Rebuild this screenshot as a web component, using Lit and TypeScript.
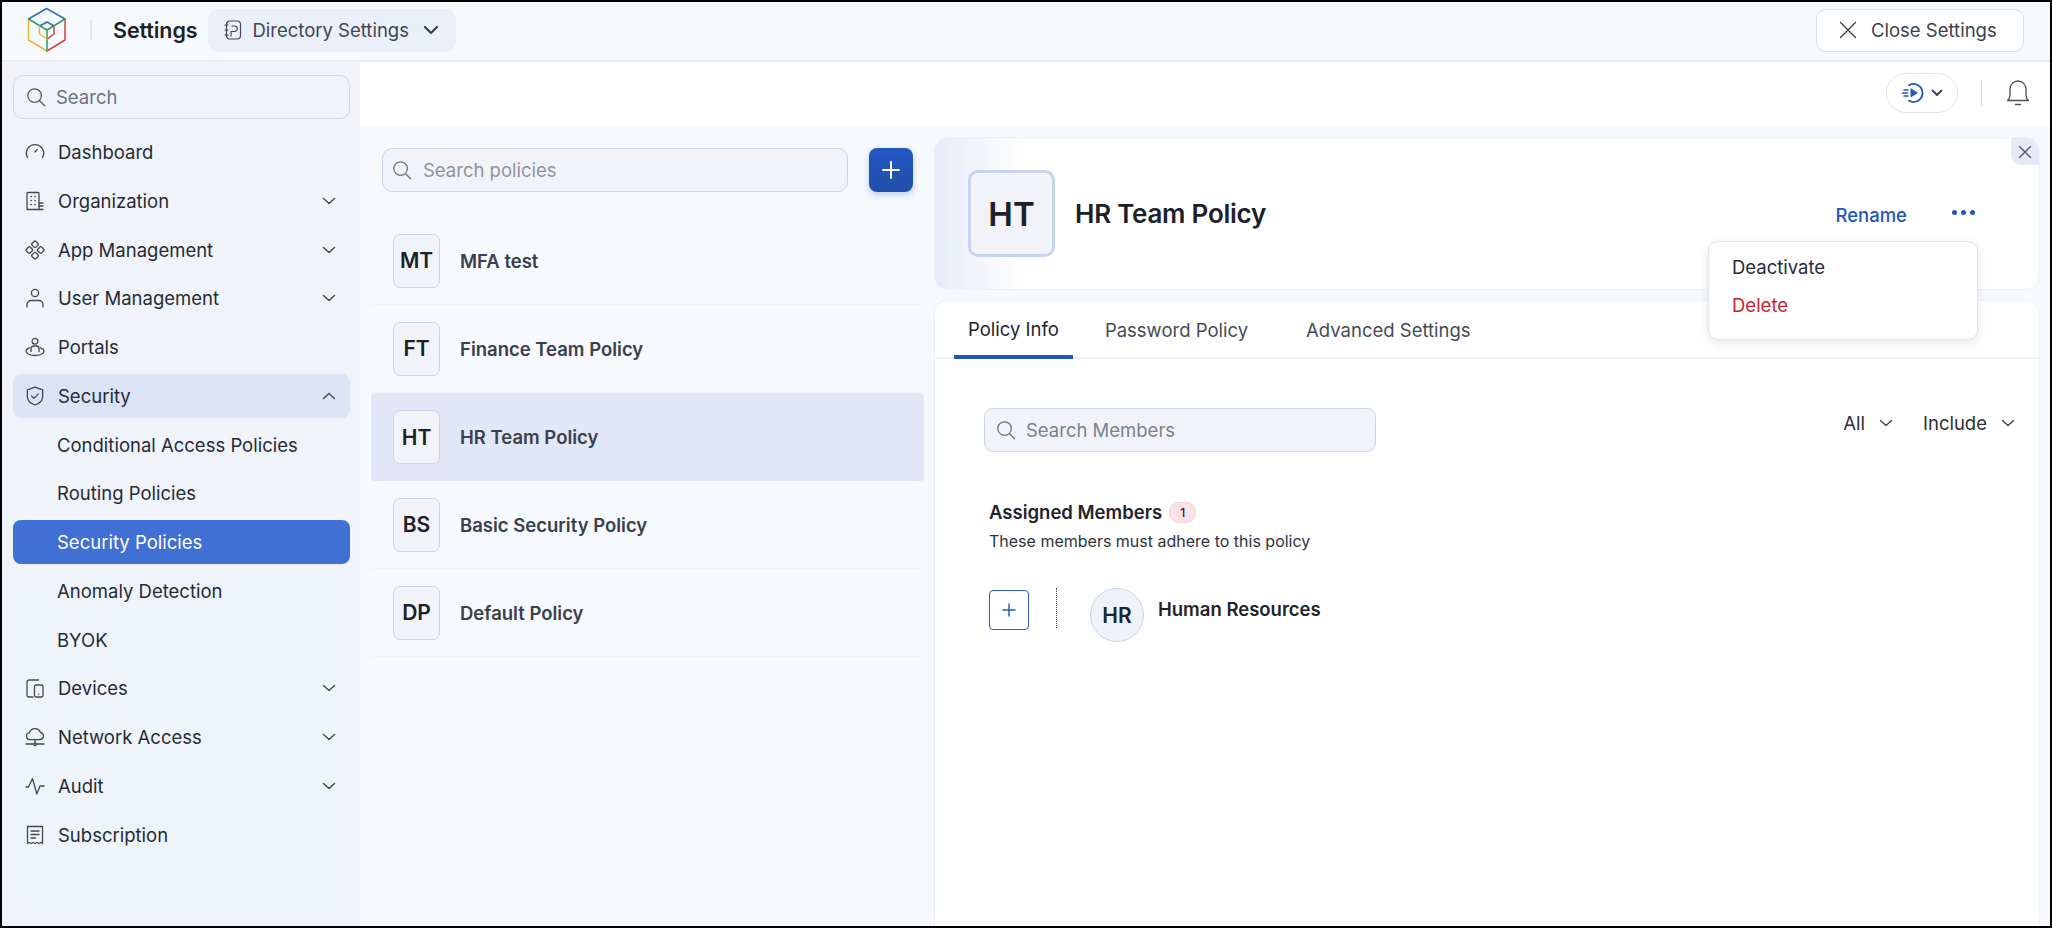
import { LitElement, html, css, svg } from "lit";
import { customElement } from "lit/decorators.js";

const ic = (body: unknown, size = 20, vb = 20) =>
  html`<svg class="ic" width=${size} height=${size} viewBox="0 0 ${vb} ${vb}" fill="none" stroke="currentColor" stroke-width="1.3" stroke-linecap="round" stroke-linejoin="round">${body}</svg>`;

const chevDown = html`<svg class="chev" width="14" height="14" viewBox="0 0 14 14" fill="none" stroke="#3f4651" stroke-width="1.4" stroke-linecap="round" stroke-linejoin="round"><path d="M1.5 4.5 7 9.5l5.5-5"/></svg>`;
const chevUp = html`<svg class="chev" width="14" height="14" viewBox="0 0 14 14" fill="none" stroke="#3f4651" stroke-width="1.4" stroke-linecap="round" stroke-linejoin="round"><path d="M1.5 9.5 7 4.5l5.5 5"/></svg>`;
const searchIc = (c: string) => html`<svg width="20" height="20" viewBox="0 0 20 20" fill="none" stroke=${c} stroke-width="1.3" stroke-linecap="round"><circle cx="8.6" cy="8.6" r="6.8"/><path d="m13.6 13.8 5 5"/></svg>`;

const icons: Record<string, unknown> = {
  dash: svg`<path d="M2.5 15.5a8.6 8.6 0 1 1 15 0"/><path d="m10 10 2.4-2.6"/>`,
  org: svg`<path d="M2 18.5V2.5a1 1 0 0 1 1-1h10a1 1 0 0 1 1 1v16H3a1 1 0 0 1-1-1z"/><path d="M6 5.5h.4M9.8 5.5h.4M6 9.5h.4M9.8 9.5h.4M6 13.5h.4M9.8 13.5h.4M14 12h4M14 15h4M14 18.5h4"/>`,
  app: svg`<rect x="7.3" y="1.6" width="5.4" height="5.4" rx="1.4" transform="rotate(45 10 4.3)"/><rect x="7.3" y="13" width="5.4" height="5.4" rx="1.4" transform="rotate(45 10 15.7)"/><rect x="1.6" y="7.3" width="5.4" height="5.4" rx="1.4" transform="rotate(45 4.3 10)"/><rect x="13" y="7.3" width="5.4" height="5.4" rx="1.4" transform="rotate(45 15.7 10)"/>`,
  user: svg`<circle cx="10" cy="5" r="3.6"/><path d="M2 19v-2.500a4 4 0 0 1 4-4h8a4 4 0 0 1 4 4V19"/>`,
  portal: svg`<circle cx="10" cy="4.200" r="2.900"/><path d="M6 14.500v-2.700a2.800 2.800 0 0 1 2.800-2.800h2.400a2.800 2.800 0 0 1 2.800 2.800v2.700"/><path d="M4.500 10.800C2.500 11.600 1 12.800 1 14.300 1 16.600 5 18.500 10 18.500s9-1.900 9-4.200c0-1.500-1.500-2.700-3.500-3.500"/>`,
  shield: svg`<path d="M10 1.200 2.300 3.800v6.400c0 4.300 3.200 7.300 7.700 8.800 4.500-1.500 7.700-4.500 7.700-8.800V3.800z"/><path d="m6.600 10 2.400 2.400 4.300-4.500"/>`,
  device: svg`<path d="M13.500 2H4a2 2 0 0 0-2 2v13a2 2 0 0 0 2 2h4"/><rect x="9.500" y="7" width="8.500" height="12" rx="1.500"/><path d="M13.700 16.200h.1"/>`,
  cloud: svg`<path d="M5.500 13.500h9.800a3.700 3.700 0 0 0 .5-7.300A6 6 0 0 0 4.600 6.400 3.600 3.600 0 0 0 5.500 13.500z" transform="translate(-.3 -.8)"/><path d="M10 13v4M1 17h7M12 17h7"/><circle cx="10" cy="17.300" r="1.400"/>`,
  audit: svg`<path d="M1 11h2.500L7.500 2.500l4.300 15.500 3.200-8h4"/>`,
  receipt: svg`<path d="M2.500 18.500V1.500h15v17l-1.900-1-1.900 1-1.900-1-1.800 1-1.900-1-1.900 1-1.800-1z"/><path d="M6 6h8M6 9.500h8M6 13h4.500"/>`,
};

type NavRow = { label: string; icon?: string; chev?: "down" | "up"; sub?: boolean; cls?: string };
const nav: NavRow[] = [
  { label: "Dashboard", icon: "dash" },
  { label: "Organization", icon: "org", chev: "down" },
  { label: "App Management", icon: "app", chev: "down" },
  { label: "User Management", icon: "user", chev: "down" },
  { label: "Portals", icon: "portal" },
  { label: "Security", icon: "shield", chev: "up", cls: "open" },
  { label: "Conditional Access Policies", sub: true },
  { label: "Routing Policies", sub: true },
  { label: "Security Policies", sub: true, cls: "current" },
  { label: "Anomaly Detection", sub: true },
  { label: "BYOK", sub: true },
  { label: "Devices", icon: "device", chev: "down" },
  { label: "Network Access", icon: "cloud", chev: "down" },
  { label: "Audit", icon: "audit", chev: "down" },
  { label: "Subscription", icon: "receipt" },
];

const policies = [
  { a: "MT", n: "MFA test" },
  { a: "FT", n: "Finance Team Policy" },
  { a: "HT", n: "HR Team Policy", sel: true },
  { a: "BS", n: "Basic Security Policy" },
  { a: "DP", n: "Default Policy" },
];

@customElement("app-root")
export class AppRoot extends LitElement {
  static styles = css`
    :host { display: block; width: 2052px; height: 928px; box-sizing: border-box; border: 2px solid #000; font-family: Inter, "Noto Sans", sans-serif; color: #22272f; overflow: hidden; background: #f6f9fd; }
    * { box-sizing: border-box; }
    svg { display: block; flex: none; }
    .header { height: 60px; display: flex; align-items: center; background: #f7fafd; border-bottom: 2px solid #e9ecf1; padding: 0 26px 2px 25px; }
    .logo { margin-right: 23px; }
    .hdiv { width: 2px; height: 20px; background: #e1e4e9; margin-right: 21px; }
    .title { font-size: 21.5px; font-weight: 600; color: #1c2029; margin-right: 11px; letter-spacing: -.1px; }
    .module { height: 43px; width: 248px; display: flex; align-items: center; gap: 10px; padding: 0 16px; background: #eaeff9; border-radius: 10px; font-size: 18.500px; color: #3f4651; }
    .module .t { flex: 1; white-space: nowrap; }
    .spacer { flex: 1; }
    .close { height: 43px; width: 208px; display: flex; align-items: center; gap: 14px; padding: 0 22px; background: #fff; border: 1.500px solid #d8dce3; border-radius: 10px; font-size: 18.500px; color: #3b424d; white-space: nowrap; }
    .body { display: flex; height: 864px; }
    .side { width: 358px; flex: none; padding: 13px 10px 0 11px; background: linear-gradient(180deg, #f1f3f9, #eff3fb); }
    .sbox { height: 44px; display: flex; align-items: center; gap: 10px; padding: 0 12px; border: 1.500px solid #d5d8df; border-radius: 10px; font-size: 18.500px; color: #6b7280; }
    .nav { margin-top: 11px; display: flex; flex-direction: column; gap: 4.750px; }
    .row { height: 44px; flex: none; display: flex; align-items: center; padding: 0 14px 0 12px; border-radius: 8px; font-size: 18.500px; color: #262b34; }
    .row .ic { margin-right: 13px; color: #424852; width: 20px; height: 20px; }
    .row .l { flex: 1; white-space: nowrap; }
    .row.sub { padding-left: 44px; }
    .row.open { background: #dbe4f5; }
    .row.current { background: #4070d4; color: #fff; }
    .main { flex: 1; display: flex; flex-direction: column; min-width: 0; }
    .topbar { height: 64px; flex: none; background: #fff; display: flex; align-items: center; justify-content: flex-end; padding: 0 20px 2px 0; }
    .run { width: 72px; height: 40px; border: 1.500px solid #dfe3e9; border-radius: 20px; display: flex; align-items: center; justify-content: center; gap: 5px; margin-right: 23px; }
    .vline { width: 1px; height: 26px; background: #d5d8de; margin-right: 24px; }
    .content { flex: 1; display: flex; min-height: 0; }
    .list { width: 574px; flex: none; padding: 22px 10px 0 11px; }
    .ltop { display: flex; align-items: center; padding: 0 11px; gap: 21px; margin-bottom: 25px; }
    .psearch { flex: 1; height: 44px; display: flex; align-items: center; gap: 11px; padding: 0 9px; background: #f1f3f9; border: 1.500px solid #c9d5ee; border-radius: 10px; font-size: 18.500px; color: #8d94a1; }
    .add { width: 44px; height: 44px; border-radius: 8px; background: linear-gradient(180deg, #2456c4, #204ea8); box-shadow: 0 3px 6px rgba(32,78,168,.25); display: flex; align-items: center; justify-content: center; }
    .item { height: 88px; display: flex; align-items: center; padding: 0 17px 0 22px; gap: 20px; border-bottom: 1.500px solid #f0f2f6; font-size: 18.500px; font-weight: 600; color: #3a404b; }
    .item.sel { background: #e1e7f6; border-bottom: 0; border-radius: 4px; font-weight: 600; }
    .item .av { width: 47px; height: 54px; flex: none; display: flex; align-items: center; justify-content: center; background: #f1f3f9; border: 1.500px solid #c9d5ee; border-radius: 7px; font-size: 21px; font-weight: 600; color: #1c2029; }
    .detail { flex: 1; position: relative; padding: 11px 10px 0 0; min-width: 0; }
    .dhead { position: relative; height: 153px; border: 1px solid #edf0f5; border-radius: 14px; background: linear-gradient(90deg, #e6ebf8 0, #fff 8%); display: flex; align-items: center; padding: 0 64px 0 33px; }
    .dav { width: 87px; height: 87px; flex: none; display: flex; align-items: center; justify-content: center; background: #f1f3f9; border: 3.500px solid #c6d4f0; border-radius: 10px; font-size: 33px; font-weight: 600; color: #1c2029; margin-right: 20px; }
    .dtitle { flex: 1; font-size: 26px; font-weight: 600; color: #1c2029; letter-spacing: -.25px; }
    .rename { font-size: 18.500px; font-weight: 500; color: #2256b8; margin-right: 45px; margin-top: 2px; }
    .dots { display: flex; gap: 4px; margin-bottom: 2px; }
    .dots i { width: 5px; height: 5px; border-radius: 50%; background: #2256b8; }
    .x { position: absolute; top: 0; right: 0; width: 28px; height: 27px; background: #e6eaf6; border-radius: 0 14px 0 10px; display: flex; align-items: center; justify-content: center; }
    .menu { position: absolute; left: 774px; top: 115px; width: 270px; height: 99px; background: #fff; border: 1px solid #e2e5ea; border-radius: 10px; box-shadow: 0 3px 10px rgba(40,50,70,.12); padding: 12px 23px; font-size: 18.500px; display: flex; flex-direction: column; gap: 12px; z-index: 2; }
    .menu div { line-height: 26px; color: #262b34; }
    .menu .del { color: #c4232d; }
    .card { margin-top: 10px; height: 640px; background: #fff; border: 1px solid #edf0f5; border-bottom: 0; border-radius: 14px 14px 0 0; }
    .tabs { height: 58px; display: flex; gap: 0; padding-left: 19px; border-bottom: 2px solid #eff1f5; font-size: 18.500px; color: #454b56; }
    .tab { height: 58px; display: flex; align-items: center; padding: 0 14px; margin-right: 30px; }
    .tab.on { color: #1f242c; border-bottom: 4px solid #2256b8; padding-top: 1px; margin-right: 18px; }
    .tab + .tab + .tab { margin-right: 0; margin-left: 0; }
    .tools { display: flex; align-items: center; padding: 49px 24px 0 49px; }
    .msearch { width: 392px; height: 44px; display: flex; align-items: center; gap: 10px; padding: 0 11px; background: #f1f3f9; border: 1.500px solid #c9d5ee; border-radius: 9px; font-size: 18.500px; color: #7a818e; }
    .drop { display: flex; align-items: center; gap: 14px; font-size: 18.500px; color: #2a2f38; margin-bottom: 14px; }
    .drop + .drop { margin-left: 30px; }
    .assign { padding: 49px 0 0 54px; }
    .ah { display: flex; align-items: center; gap: 7px; font-size: 18.500px; font-weight: 600; color: #1f242c; }
    .badge { width: 27px; height: 21px; border-radius: 10px; background: #fde2e5; border: 1px solid #f8d0d5; font-size: 12px; font-weight: 500; display: flex; align-items: center; justify-content: center; }
    .as { margin-top: 7px; font-size: 16px; color: #2e333c; line-height: 22px; }
    .members { display: flex; align-items: flex-start; margin-top: 36px; }
    .pbox { width: 40px; height: 40px; margin-top: 2px; border: 1.500px solid #2a5fc0; border-radius: 4px; display: flex; align-items: center; justify-content: center; }
    .dot { height: 40px; border-left: 1.500px dotted #444; margin: 0 33px 0 27px; }
    .circ { width: 54px; height: 54px; flex: none; border-radius: 50%; background: #f0f2f9; border: 1.500px solid #c9d5ee; display: flex; align-items: center; justify-content: center; font-size: 21px; font-weight: 600; color: #1f242c; margin-right: 14px; }
    .mname { font-size: 18.500px; font-weight: 600; color: #1f242c; margin-top: 10px; }
  `;

  render() {
    return html`
      <div class="header">
        <svg class="logo" width="40" height="46" viewBox="0 0 40 46" fill="none" stroke-width="1.500" stroke-linejoin="round" stroke-linecap="round">
          <path d="M1.500 12 19.500 1.500 38 12" stroke="#2f6db5"/>
          <path d="M38 12v21L20 44" stroke="#d9403a"/>
          <path d="M1.500 12v21L20 44" stroke="#f2b233"/>
          <path d="M1.500 12 20 23 38 12M20 23v21" stroke="#2e9e55"/>
          <path d="M12.500 19 20 15l7 4" stroke="#2f6db5"/>
          <path d="M27 19v8l-7 5" stroke="#d9403a"/>
          <path d="M12.500 19v8l7.500 5" stroke="#f2b233"/>
        </svg>
        <div class="hdiv"></div>
        <div class="title">Settings</div>
        <div class="module">
          <svg width="18" height="20" viewBox="0 0 18 20" fill="none" stroke="#3f4651" stroke-width="1.200" stroke-linecap="round"><rect x="2.500" y="1" width="14" height="18" rx="3.500"/><path d="M1 5h3M1 10h3M1 15h3M7 16v-4.500h3.500a2 2 0 0 0 0-5.500H8"/></svg>
          <span class="t">Directory Settings</span>
          <svg width="18" height="18" viewBox="0 0 18 18" fill="none" stroke="#3a404b" stroke-width="2.200" stroke-linecap="round" stroke-linejoin="round"><path d="M3 6l6 6 6-6"/></svg>
        </div>
        <div class="spacer"></div>
        <div class="close">
          <svg width="18" height="18" viewBox="0 0 18 18" fill="none" stroke="#3b424d" stroke-width="1.300" stroke-linecap="round"><path d="M1.500 1.500l15 15M16.500 1.500l-15 15"/></svg>
          <span>Close Settings</span>
        </div>
      </div>
      <div class="body">
        <aside class="side">
          <div class="sbox">${searchIc("#555c67")}<span>Search</span></div>
          <div class="nav">
            ${nav.map(
              (r) => html`<div class="row ${r.sub ? "sub" : ""} ${r.cls ?? ""}">
                ${r.icon ? ic(icons[r.icon]) : ""}
                <span class="l">${r.label}</span>
                ${r.chev === "down" ? chevDown : r.chev === "up" ? chevUp : ""}
              </div>`
            )}
          </div>
        </aside>
        <div class="main">
          <div class="topbar">
            <div class="run">
              <svg width="24" height="22" viewBox="0 0 24 22" fill="none" stroke="#2256b8" stroke-width="1.800" stroke-linecap="round"><path d="M8 3.200A9 9 0 1 1 8 18.800"/><path d="M10 7.200v7.600l6-3.800z" fill="#2256b8" stroke-linejoin="round" stroke-width="1"/><path d="M3 8h4M1.500 11h5M3 14h4" stroke-width="1.400"/></svg>
              <svg width="14" height="14" viewBox="0 0 14 14" fill="none" stroke="#3f4651" stroke-width="1.900" stroke-linecap="round" stroke-linejoin="round"><path d="M2.500 4.500 7 9l4.500-4.500"/></svg>
            </div>
            <div class="vline"></div>
            <svg width="24" height="28" viewBox="0 0 24 28" fill="none" stroke="#4a505a" stroke-width="1.300" stroke-linecap="round" stroke-linejoin="round"><path d="M1.500 21.500c2-1.500 2.500-3.500 2.500-6.500V10a8 8 0 0 1 16 0v5c0 3 .5 5 2.500 6.500z"/><path d="M9.500 25.500h5"/></svg>
          </div>
          <div class="content">
            <section class="list">
              <div class="ltop">
                <div class="psearch">${searchIc("#6d7480")}<span>Search policies</span></div>
                <div class="add"><svg width="20" height="20" viewBox="0 0 20 20" fill="none" stroke="#fff" stroke-width="2" stroke-linecap="round"><path d="M10 2v16M2 10h16"/></svg></div>
              </div>
              ${policies.map(
                (p) => html`<div class="item ${p.sel ? "sel" : ""}"><div class="av">${p.a}</div><span>${p.n}</span></div>`
              )}
            </section>
            <section class="detail">
              <div class="dhead">
                <div class="dav">HT</div>
                <div class="dtitle">HR Team Policy</div>
                <span class="rename">Rename</span>
                <div class="dots"><i></i><i></i><i></i></div>
                <div class="x"><svg width="14" height="14" viewBox="0 0 14 14" fill="none" stroke="#4a505a" stroke-width="1.200" stroke-linecap="round"><path d="M1.500 1.500l11 11M12.500 1.500l-11 11"/></svg></div>
              </div>
              <div class="menu"><div>Deactivate</div><div class="del">Delete</div></div>
              <div class="card">
                <div class="tabs">
                  <div class="tab on">Policy Info</div>
                  <div class="tab">Password Policy</div>
                  <div class="tab">Advanced Settings</div>
                </div>
                <div class="tools">
                  <div class="msearch">${searchIc("#6d7480")}<span>Search Members</span></div>
                  <div class="spacer"></div>
                  <div class="drop">All ${chevDown}</div>
                  <div class="drop">Include ${chevDown}</div>
                </div>
                <div class="assign">
                  <div class="ah"><span>Assigned Members</span><span class="badge">1</span></div>
                  <div class="as">These members must adhere to this policy</div>
                  <div class="members">
                    <div class="pbox"><svg width="14" height="14" viewBox="0 0 14 14" fill="none" stroke="#2a5fc0" stroke-width="1.500" stroke-linecap="round"><path d="M7 1v12M1 7h12"/></svg></div>
                    <div class="dot"></div>
                    <div class="circ">HR</div>
                    <div class="mname">Human Resources</div>
                  </div>
                </div>
              </div>
            </section>
          </div>
        </div>
      </div>
    `;
  }
}
